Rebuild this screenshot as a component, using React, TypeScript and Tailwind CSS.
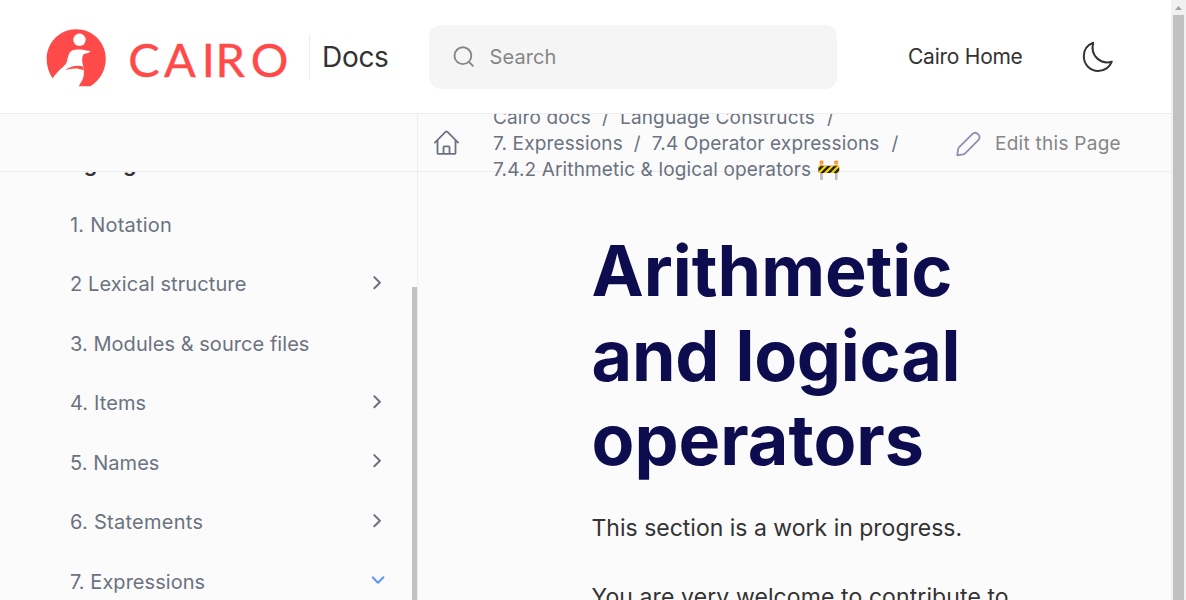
import React from "react";

const sections = [
  { label: "1. Notation", state: "leaf", spacing: "tracking-[.22px]" },
  { label: "2 Lexical structure", state: "closed", spacing: "tracking-[.1px]" },
  { label: "3. Modules & source files", state: "leaf", spacing: "tracking-[.05px]" },
  { label: "4. Items", state: "closed", spacing: "tracking-[.1px]" },
  { label: "5. Names", state: "closed", spacing: "tracking-[.05px]" },
  { label: "6. Statements", state: "closed", spacing: "tracking-[.27px]" },
  { label: "7. Expressions", state: "open", spacing: "tracking-[.04px]" },
];

function LogoMark() {
  return (
    <svg viewBox="0 0 60 58" className="mt-0.5 h-[58px] w-[60px] shrink-0">
      <path
        fill="#ff4a4a"
        d="M30.300 .2C13.900 .2 .7 13.400 .7 29.600C.7 37 2.800 44 6.600 49.200C9.600 45.400 12.600 41 17 37.900C19.600 36 20.800 33.600 21.400 30.800C22.100 26.800 22.800 23.600 25.600 21.700C28 20.400 31 20.700 34 20.500C37.600 20.400 40.600 22 44.400 21.900C44 23.600 41.600 24.200 39.600 24.500C37 24.900 36.400 27 36.200 29.600C36 32.400 36.600 34.600 37.200 37C38 41 38.400 44.600 37.400 48C36.200 52 34.200 54.400 32.800 57.200H44.400C53.400 52 59.800 42 59.800 29.600C59.800 13.400 46.700 .2 30.300 .2Z"
      />
      <circle cx="33.500" cy="10.800" r="6.200" fill="#fff" />
      <path fill="#ff4a4a" d="M19 41.200C24 37.400 31 35.800 37 37.600L37.800 41.500C31 38.400 25 39.600 19 41.200Z" />
    </svg>
  );
}

function Wordmark() {
  return (
    <svg viewBox="0 0 160 40" className="ml-[23px] h-10 w-40 shrink-0 overflow-visible">
      <text
        x="-.7 35 72.700 86.500 121.800"
        y="40"
        fill="#ff4a4a"
        stroke="#ff4a4a"
        strokeWidth=".4"
        className="font-['Lato'] text-[47px]"
      >
        CAIRO
      </text>
    </svg>
  );
}

function Chevron({ open }: { open: boolean }) {
  return (
    <svg
      viewBox="0 0 14 14"
      fill="none"
      strokeWidth="2"
      strokeLinecap="round"
      strokeLinejoin="round"
      className={open ? "mt-[-4px] h-3.5 w-3.5 stroke-[#5c94ff]" : "mt-[-3px] h-3.5 w-3.5 stroke-[#6b7280]"}
    >
      <path d={open ? "M.6 4.300 6 9.700l5.400-5.400" : "M2.300 1.100 7.900 6.700 2.300 12.300"} />
    </svg>
  );
}

function Header() {
  return (
    <header className="relative z-10 flex h-[114px] shrink-0 items-center border-b border-[#ededed] bg-white">
      <div className="ml-[46px] flex items-center">
        <LogoMark />
        <Wordmark />
      </div>
      <div className="ml-5 h-[46px] w-px bg-[#ededed]" />
      <div className="ml-3 w-[107px] text-[28px] leading-9 tracking-[-.3px] text-[#333]">Docs</div>
      <div className="flex h-16 w-[408px] items-center rounded-xl bg-[#f5f5f5]">
        <svg viewBox="0 0 22 22" className="ml-6 h-[22px] w-[22px]" fill="none" stroke="#868686" strokeWidth="1.900" strokeLinecap="round">
          <circle cx="9.900" cy="9.700" r="8.400" />
          <path d="m16.200 16.200 3.700 3.700" />
        </svg>
        <span className="ml-[14.500px] text-[20px] tracking-[.1px] text-[#868686]">Search</span>
      </div>
      <a className="ml-[71px] w-[174px] text-[21px] tracking-[-.25px] text-[#333]">Cairo Home</a>
      <svg viewBox="0 0 32 32" className="h-8 w-8" fill="none" stroke="#333" strokeWidth="2" strokeLinejoin="round">
        <path d="M11.200 1.800C5.500 4 1.800 9 1.800 15.200C1.800 23.600 8.200 29.900 16.200 29.900C22.400 29.900 27.800 26.200 29.800 20.700C19.800 23.700 7.700 15.800 11.200 1.800Z" />
      </svg>
    </header>
  );
}

function Toolbar() {
  return (
    <div className="flex h-[58px] shrink-0 items-center border-b border-[#ededed]">
      <svg viewBox="0 0 26 26" className="ml-4 h-[26px] w-[26px] shrink-0" fill="none" stroke="#6b7280" strokeWidth="1.800" strokeLinecap="round" strokeLinejoin="round">
        <path d="M.9 12.600 11.800 1.700a1 1 0 0 1 1.400 0L24.100 12.600M3.500 10.200V22.900a1 1 0 0 0 1 1H20.500a1 1 0 0 0 1-1V10.200M9.500 23.900V17.400a1 1 0 0 1 1-1H14.500a1 1 0 0 1 1 1V23.900" />
      </svg>
      <nav className="ml-[33px] mt-0.5 w-[463px] whitespace-pre text-[19px] leading-[26px] tracking-[.14px] text-[#6b7280]">
        <div>Cairo docs<span className="mx-[11px]">/</span>Language Constructs<span className="ml-3 mr-[11px]">/</span></div>
        <div>7. Expressions<span className="mx-[11px]">/</span>7.4 Operator expressions<span className="ml-3 mr-[11px]">/</span></div>
        <div>7.4.2 Arithmetic &amp; logical operators 🚧</div>
      </nav>
      <svg viewBox="0 0 26 26" className="mt-0.5 h-[26px] w-[26px] shrink-0" fill="none" stroke="#8f8fad" strokeWidth="1.800" strokeLinejoin="round">
        <path d="M1.300 24.300 2.100 18.200Q2.300 17 3.200 16.100L16.300 3.100C20.100-.500 26 4.800 22.300 9.100L9.400 22.100Q8.500 23 7.200 23.300Z" />
      </svg>
      <span className="ml-[13px] mt-[3px] whitespace-nowrap text-[19px] tracking-[.27px] text-[#868686]">Edit this Page</span>
    </div>
  );
}

function Sidebar() {
  return (
    <aside className="flex w-[418px] shrink-0 flex-col border-r border-[#ededed]">
      <div className="h-[58px] shrink-0 border-b border-[#ededed]" />
      <div className="flex min-h-0 flex-1 overflow-hidden">
        <div className="flex w-[412px] shrink-0 flex-col pl-[70px] pr-[26px]">
          <div className="-ml-6 -mt-5 h-[43px] shrink-0 text-[21.600px] font-semibold leading-[23px] text-[#333]">Language Constructs</div>
          {sections.map((s) => (
            <div key={s.label} className="flex h-[59.500px] shrink-0 items-center justify-between text-[20px] text-[#6b7280]">
              <span className={s.spacing}>{s.label}</span>
              {s.state !== "leaf" && <Chevron open={s.state === "open"} />}
            </div>
          ))}
        </div>
        <div className="mt-[115px] w-[5px] shrink-0 bg-[#c1c1c1]" />
      </div>
    </aside>
  );
}

export default function App() {
  return (
    <div className="flex h-[600px] w-[1186px] overflow-hidden bg-[#fbfbfb] font-['Inter',sans-serif]">
      <div className="flex min-w-0 flex-1 flex-col">
        <Header />
        <div className="flex min-h-0 flex-1">
          <Sidebar />
          <main className="flex min-w-0 flex-1 flex-col">
            <Toolbar />
            <article className="min-h-0 flex-1 overflow-hidden pl-[173.500px] pt-[57px] text-[#333]">
              <h1 className="whitespace-nowrap text-[70px] font-bold leading-[84.600px] text-[#0c0c4f]">
                Arithmetic<br />
                <span className="tracking-[-.25px]">and logical</span><br />
                operators
              </h1>
              <p className="mt-[27px] whitespace-nowrap text-[23px] leading-9">This section is a work in progress.</p>
              <p className="mt-[33px] whitespace-nowrap text-[23px] leading-9 tracking-[.1px]">You are very welcome to contribute to</p>
            </article>
          </main>
        </div>
      </div>
      <div className="flex w-[15px] shrink-0 flex-col items-center bg-[#f1f1f1]">
        <svg viewBox="0 0 15 15" className="h-[15px] w-[15px] shrink-0">
          <path d="M4 10h7L7.500 6Z" fill="#a3a3a3" />
        </svg>
        <div className="w-[11px] flex-1 bg-[#c1c1c1]" />
      </div>
    </div>
  );
}
